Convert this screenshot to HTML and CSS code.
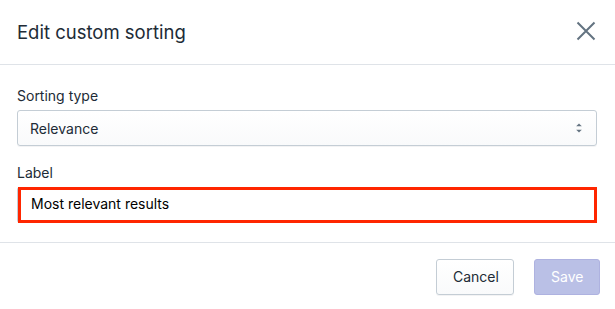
FILE: index.html
```html
<!DOCTYPE html>
<html lang="en">
<head>
<meta charset="utf-8">
<title>Edit custom sorting</title>
<link rel="stylesheet" href="styles.css">
</head>
<body>
<div class="modal">
  <header class="modal-header">
    <h2 class="modal-title">Edit custom sorting</h2>
    <button class="close-btn" type="button" aria-label="Close">
      <svg width="20" height="20" viewBox="0 0 20 20" aria-hidden="true">
        <path d="M1.5 1.5 L18.5 18.5 M18.5 1.5 L1.5 18.5" stroke="#637381" stroke-width="2" fill="none"/>
      </svg>
    </button>
  </header>
  <section class="modal-body">
    <div class="field">
      <label class="field-label">Sorting type</label>
      <div class="select">
        <span class="select-value">Relevance</span>
        <svg class="select-arrows" width="8" height="12" viewBox="0 0 8 12" aria-hidden="true">
          <path d="M1.2 4.2 L4 1.6 L6.8 4.2 Z" fill="#637381"/>
          <path d="M1.2 7.8 L4 10.4 L6.8 7.8 Z" fill="#637381"/>
        </svg>
      </div>
    </div>
    <div class="field">
      <label class="field-label">Label</label>
      <div class="text-input">
        <span class="input-value">Most relevant results</span>
      </div>
    </div>
  </section>
  <footer class="modal-footer">
    <button class="btn btn-secondary" type="button">Cancel</button>
    <button class="btn btn-primary" type="button" disabled>Save</button>
  </footer>
</div>
</body>
</html>
```

FILE: styles.css
```css
* { box-sizing: border-box; }

html, body {
  margin: 0;
  padding: 0;
  background: #ffffff;
}

body {
  font-family: Inter, "Noto Sans", "Liberation Sans", sans-serif;
  color: #212b36;
  width: 615px;
  height: 309px;
  overflow: hidden;
}

.modal {
  display: flex;
  flex-direction: column;
}

.modal-header {
  height: 65px;
  display: flex;
  align-items: center;
  justify-content: space-between;
  padding: 0 17px 0 17px;
  border-bottom: 1px solid #dfe3e8;
}

.modal-title {
  margin: 0;
  font-size: 18.5px;
  font-weight: 400;
  line-height: 24px;
  color: #212b36;
  padding-bottom: 1px;
}

.close-btn {
  border: 0;
  background: none;
  padding: 0;
  width: 20px;
  height: 20px;
  display: flex;
  margin-right: 2px;
  margin-bottom: 2px;
}

.modal-body {
  padding: 21px 18px 19px 17px;
  border-bottom: 1px solid #dfe3e8;
  display: flex;
  flex-direction: column;
  gap: 17px;
}

.field {
  display: flex;
  flex-direction: column;
}

.field-label {
  font-size: 14px;
  line-height: 20px;
  margin-bottom: 4px;
  color: #212b36;
}

.select {
  height: 36px;
  border: 1px solid #c4cdd5;
  border-radius: 3px;
  background: linear-gradient(#ffffff, #f9fafb);
  box-shadow: 0 1px 0 rgba(22, 29, 37, 0.05);
  display: flex;
  align-items: center;
  justify-content: space-between;
  padding: 0 13px 0 12px;
  font-size: 14px;
}

.select-value {
  color: #212b36;
}

.select-arrows {
  display: block;
}

.text-input {
  height: 36px;
  border: 1px solid #c4cdd5;
  border-top-color: #aeb4b9;
  border-radius: 3px;
  position: relative;
  display: flex;
  align-items: center;
  padding: 0 12px 3px 13px;
  font-size: 14px;
  color: #000000;
}

.text-input::after {
  content: "";
  position: absolute;
  top: -1px;
  left: 0;
  right: -1px;
  bottom: -1px;
  border: 3px solid #ff2600;
}

.modal-footer {
  display: flex;
  justify-content: flex-end;
  gap: 20px;
  padding: 16px 15px 0 0;
}

.btn {
  height: 36px;
  font-family: inherit;
  font-size: 14px;
  line-height: 20px;
  border-radius: 3px;
  padding: 0 16px;
}

.btn-secondary {
  width: 78px;
  border: 1px solid #c4cdd5;
  background: linear-gradient(#ffffff, #f9fafb);
  color: #212b36;
  box-shadow: 0 1px 0 rgba(22, 29, 37, 0.05);
}

.btn-primary {
  width: 66px;
  border: 1px solid #aeb2e0;
  background: #bac0e6;
  color: #ffffff;
}
```
